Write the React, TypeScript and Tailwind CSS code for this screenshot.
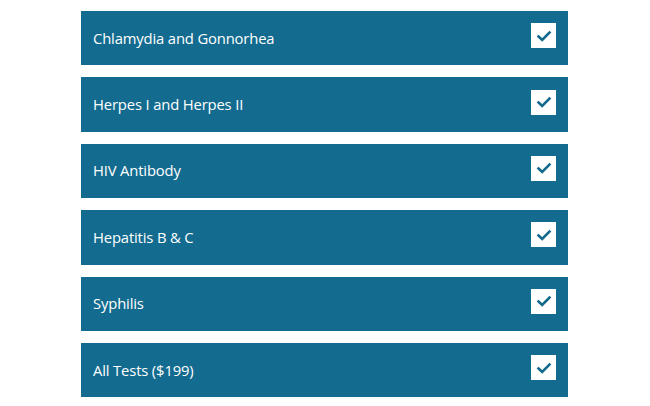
const tests = [
  "Chlamydia and Gonnorhea",
  "Herpes I and Herpes II",
  "HIV Antibody",
  "Hepatitis B & C",
  "Syphilis",
  "All Tests ($199)",
];

const Check = () => (
  <div className="w-[25px] h-[25px] bg-white flex items-center justify-center">
    <svg width="16" height="16" viewBox="0 0 16 16" fill="none">
      <path d="M2.5 8.5 L6.2 12 L13.5 4.5" stroke="#13698c" strokeWidth="2.6" strokeLinecap="square" />
    </svg>
  </div>
);

export default function App() {
  return (
    <div className="w-[650px] h-[406px] bg-white pt-[11px] pl-[81px]" style={{ fontFamily: "'Open Sans', sans-serif" }}>
      <div className="w-[487px] flex flex-col gap-[12px]">
        {tests.map((t) => (
          <div key={t} className="h-[54.4px] bg-[#136b8f] flex items-center justify-between pl-[12px] pr-[12px]">
            <span className="text-white text-[14.8px] font-medium tracking-[-0.15px] -mt-[1px]">{t}</span>
            <div className="-mt-[5px]">
              <Check />
            </div>
          </div>
        ))}
      </div>
    </div>
  );
}
